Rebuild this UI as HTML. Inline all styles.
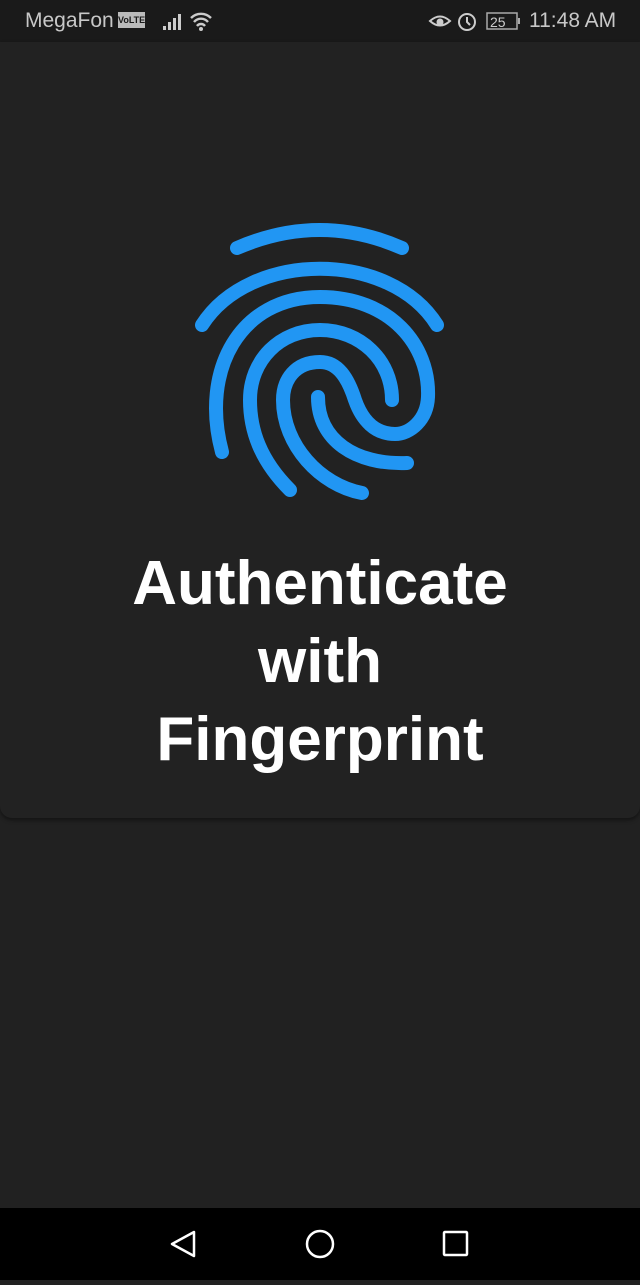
<!DOCTYPE html>
<html><head><meta charset="utf-8"><style>
html,body{margin:0;padding:0;}
body{width:640px;height:1280px;background:#212121;position:relative;overflow:hidden;font-family:"Liberation Sans",sans-serif;}
.sb{position:absolute;left:0;top:0;width:640px;height:42px;background:#1a1a1a;color:#c8c8c8;font-size:21px;}
.card{position:absolute;left:0;top:42px;width:640px;height:776px;background:#222;border-radius:0 0 12px 12px;box-shadow:0 2px 4px rgba(0,0,0,.45);}
.t{position:absolute;left:0;top:545px;width:640px;text-align:center;color:#fff;font-weight:bold;font-size:62px;line-height:78px;}
.nav{position:absolute;left:0;top:1208px;width:640px;height:72px;background:#000;}
</style></head><body>
<div class="sb">
<span style="position:absolute;left:25px;top:9px;">MegaFon</span>
<span style="position:absolute;left:118px;top:12px;width:27px;height:16px;background:#bbb;color:#1a1a1a;font-size:9px;font-weight:bold;line-height:16px;text-align:center;">VoLTE</span>
<svg style="position:absolute;left:160px;top:10px" width="60" height="24"><rect x="3" y="16" width="3" height="4" fill="#ccc"/><rect x="8" y="12" width="3" height="8" fill="#ccc"/><rect x="13" y="8" width="3" height="12" fill="#ccc"/><rect x="18" y="4" width="3" height="16" fill="#ccc"/>
<path d="M31 8 A14 14 0 0 1 51 8 M34 12 A9 9 0 0 1 48 12 M37 16 A5 5 0 0 1 45 16" stroke="#ccc" stroke-width="2.4" fill="none"/><circle cx="41" cy="19" r="2" fill="#ccc"/></svg>
<svg style="position:absolute;left:428px;top:10px" width="100" height="24"><path d="M2 11 Q12 2 22 11 Q12 20 2 11Z" fill="none" stroke="#ccc" stroke-width="2"/><circle cx="12" cy="12" r="3.5" fill="#ccc"/>
<circle cx="39" cy="12" r="8" fill="none" stroke="#ccc" stroke-width="2"/><path d="M39 7v5l3 3" stroke="#ccc" stroke-width="2" fill="none"/>
<rect x="59" y="3" width="30" height="16" fill="none" stroke="#aaa" stroke-width="1.5"/><rect x="90" y="8" width="2" height="6" fill="#aaa"/><text x="62" y="17" font-size="14" fill="#ccc" font-family="Liberation Sans">25</text></svg>
<span style="position:absolute;left:529px;top:9px;">11:48 AM</span>
</div>
<div class="card"></div>
<svg style="position:absolute;left:0;top:0" width="640" height="520">
<g stroke="#2196F3" stroke-width="14" fill="none" stroke-linecap="round">
<path d="M237,248 Q320,212 402,248"/>
<path d="M202,325 C250,250 390,250 437,325"/>
<path d="M222,452 C200,370 240,297 320,297 C390,297 430,345 428,397 C427,420 410,434 395,434 C375,434 362,420 355,400 C348,378 338,362 320,362 C295,362 283,380 283,400 C283,445 320,485 362,493"/>
<path d="M290,490 C260,460 250,430 250,400 C250,360 280,330 320,330 C360,330 392,360 392,400"/>
<path d="M318,397 C318,440 355,465 407,463"/>
</g></svg>
<div class="t">Authenticate<br>with<br>Fingerprint</div>
<div class="nav">
<svg width="640" height="72"><path d="M194 24 L172 36 L194 48 Z" fill="none" stroke="#fff" stroke-width="2.5" stroke-linejoin="round"/><circle cx="320" cy="36" r="13" fill="none" stroke="#fff" stroke-width="2.5"/><rect x="444" y="24" width="23" height="23" rx="1" fill="none" stroke="#fff" stroke-width="2.5"/></svg>
</div>
</body></html>
